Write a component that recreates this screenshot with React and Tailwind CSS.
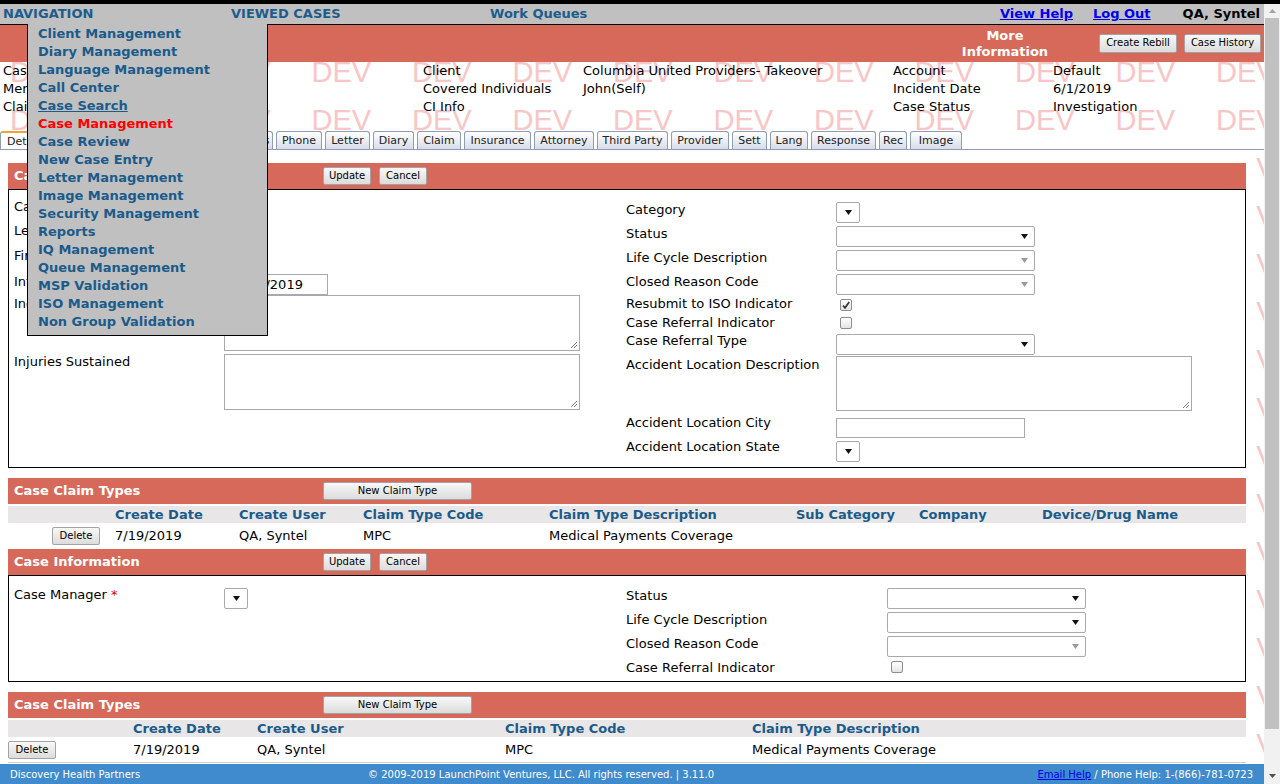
import React from "react";

const menuItems = [
  "Client Management",
  "Diary Management",
  "Language Management",
  "Call Center",
  "Case Search",
  "Case Management",
  "Case Review",
  "New Case Entry",
  "Letter Management",
  "Image Management",
  "Security Management",
  "Reports",
  "IQ Management",
  "Queue Management",
  "MSP Validation",
  "ISO Management",
  "Non Group Validation",
];

const tabs = [
  { label: "Details", w: "w-[48px]", active: true },
  { label: "Member", w: "w-[56px]" },
  { label: "Claimant", w: "w-[60px]" },
  { label: "Contacts", w: "w-[58px]" },
  { label: "Notes", w: "w-[39px]" },
  { label: "Phone", w: "w-[46px]" },
  { label: "Letter", w: "w-[45px]" },
  { label: "Diary", w: "w-[41px]" },
  { label: "Claim", w: "w-[44px]" },
  { label: "Insurance", w: "w-[67px]" },
  { label: "Attorney", w: "w-[60px]" },
  { label: "Third Party", w: "w-[71px]" },
  { label: "Provider", w: "w-[58px]" },
  { label: "Sett", w: "w-[35px]" },
  { label: "Lang", w: "w-[38px]" },
  { label: "Response", w: "w-[65px]" },
  { label: "Rec", w: "w-[28px]" },
  { label: "Image", w: "w-[52px]" },
];

const infoRows = [
  ["Case Number", "", "Client", "Columbia United Providers- Takeover", "Account", "Default"],
  ["Member", "", "Covered Individuals", "John(Self)", "Incident Date", "6/1/2019"],
  ["Claimant", "", "CI Info", "", "Case Status", "Investigation"],
];

const wmRows = Array.from({ length: 16 });
const wmCols = Array.from({ length: 13 });

function Btn({ children, className }) {
  return (
    <div className={"h-[18px] border border-[#a3a3a3] rounded-[2px] bg-linear-to-b from-[#f8f8f8] to-[#dcdcdc] text-[10px] text-black flex items-center justify-center leading-none " + className}>
      {children}
    </div>
  );
}

function Arrow({ disabled }) {
  return (
    <svg width="7" height="5" viewBox="0 0 7 5">
      <path d="M0 0H7L3.5 5Z" fill={disabled ? "#9a9a9a" : "#111"} />
    </svg>
  );
}

function Select({ className, disabled, small }) {
  return (
    <div className={"h-[21px] border border-[#a9a9a9] rounded-[2px] bg-white flex items-center " + (small ? "justify-center " : "justify-end pr-[6px] ") + className}>
      <Arrow disabled={disabled} />
    </div>
  );
}

function Check({ checked }) {
  return (
    <div className="w-[12px] h-[12px] border border-[#8e8e8e] rounded-[2px] bg-linear-to-b from-white to-[#e4e4e4] flex items-center justify-center">
      {checked && (
        <svg width="10" height="10" viewBox="0 0 10 10">
          <path d="M2 5.5L4 7.8L8.2 2" stroke="#333" strokeWidth="1.7" fill="none" />
        </svg>
      )}
    </div>
  );
}

function TextArea({ className }) {
  return (
    <div className={"relative border border-[#a9a9a9] bg-white " + className}>
      <svg width="9" height="9" viewBox="0 0 9 9" className="absolute right-[1px] bottom-[1px]">
        <path d="M8 2L2 8M8 5L5 8" stroke="#7a7a7a" strokeWidth="1" />
      </svg>
    </div>
  );
}

function SectionHeader({ title, children }) {
  return (
    <div className="h-[26px] bg-[#d7695a] flex items-center">
      <div className="w-[315px] pl-[6px] font-bold text-white">{title}</div>
      <div className="flex gap-[8px]">{children}</div>
    </div>
  );
}

function Row({ label, labelCls = "", h, children, col = "w-[210px]" }) {
  return (
    <div className={"flex " + h}>
      <div className={"leading-[14px] " + col + " " + labelCls}>{label}</div>
      <div>{children}</div>
    </div>
  );
}

export default function App() {
  return (
    <div className="w-[1280px] h-[784px] overflow-hidden bg-white text-black text-[13px] font-['DejaVu_Sans',sans-serif]">
      <div className="h-[4px] bg-black" />
      <div className="flex h-[780px]">
        <div className="relative w-[1264px] flex flex-col overflow-hidden">
          {/* DEV watermark */}
          <div className="absolute inset-0 pt-[54px] font-['Liberation_Sans',sans-serif] text-[29px] leading-[29px] text-[#f8c6c6] pointer-events-none">
            {wmRows.map((_, r) => (
              <div key={r} className="h-[48px] flex pl-[10px]">
                {wmCols.map((_, c) => (
                  <span key={c} className="w-[100.5px] shrink-0">DEV</span>
                ))}
              </div>
            ))}
          </div>

          {/* top nav */}
          <div className="relative h-[20px] bg-[#c0c0c0] flex items-center font-bold leading-[20px]">
            <div className="w-[231px] pl-[3px] text-[#1b5d8d]">NAVIGATION</div>
            <div className="w-[259px] text-[#1b5d8d]">VIEWED CASES</div>
            <div className="flex-1 text-[#1b5d8d]">Work Queues</div>
            <div className="text-[#0000ee] underline">View Help</div>
            <div className="ml-[20px] text-[#0000ee] underline">Log Out</div>
            <div className="ml-[32px] pr-[4px]">QA, Syntel</div>
          </div>

          {/* red title bar */}
          <div className="relative h-[38px] border-t border-black bg-[#d7695a] flex items-center justify-end pr-[3px]">
            <div className="w-[130px] text-center text-white font-bold leading-[16px]">
              More
              <br />
              Information
            </div>
            <div className="ml-[29px] flex gap-[7px] mb-[1px]">
              <Btn className="w-[78px] h-[19px]">Create Rebill</Btn>
              <Btn className="w-[77px] h-[19px]">Case History</Btn>
            </div>
          </div>

          {/* case info summary */}
          <div className="relative h-[66px] leading-[18px]">
            {infoRows.map((row, i) => (
              <div key={i} className="grid grid-cols-[160px_260px_160px_310px_160px_1fr] pl-[3px]">
                {row.map((cell, j) => (
                  <div key={j} className="whitespace-nowrap">{cell}</div>
                ))}
              </div>
            ))}
          </div>

          {/* tabs */}
          <div className="relative h-[22px] border-b border-[#8e9db2] flex items-end gap-[3px]">
            {tabs.map((t) => (
              <div
                key={t.label}
                className={
                  "h-[18px] text-[11px] leading-[17px] border border-b-0 rounded-t-[3px] text-[#222] whitespace-nowrap overflow-hidden " +
                  t.w +
                  (t.active
                    ? " bg-white border-[#8e9db2] border-t-2 border-t-[#eda43a] pl-[6px] leading-[16px]"
                    : " text-center bg-linear-to-b from-white to-[#d8dcea] border-[#8e9db2]")
                }
              >
                {t.label}
              </div>
            ))}
          </div>

          {/* content */}
          <div className="relative flex-1 overflow-hidden flex">
            <div className="w-[1256px] bg-white pl-[8px] pr-[10px] pt-[13px]">
              <SectionHeader title="Case Details">
                <Btn className="w-[48px]">Update</Btn>
                <Btn className="w-[48px]">Cancel</Btn>
              </SectionHeader>
              <div className="border border-black bg-white flex h-[279px]">
                <div className="w-[617px] pt-[10px] flex flex-col">
                  <Row label="Case Source" h="h-[24px]" col="w-[215px] pl-[5px] leading-4" />
                  <Row label="Lead Source" h="h-[24px]" col="w-[215px] pl-[5px] leading-4" />
                  <Row label="First Notice Date" h="h-[26px]" col="w-[215px] pl-[5px] leading-4 pt-[1px]" />
                  <Row label="Intake Date" h="h-[21px]" col="w-[215px] pl-[5px] leading-4 pt-[1px]">
                    <div className="w-[104px] h-[21px] border border-[#a9a9a9] bg-white pl-[3px] leading-[19px]">07/19/2019</div>
                  </Row>
                  <Row label="Incident Description" h="h-[59px]" col="w-[215px] pl-[5px] leading-4 pt-[2px]">
                    <TextArea className="w-[356px] h-[56px]" />
                  </Row>
                  <Row label="Injuries Sustained" h="h-[56px]" col="w-[215px] pl-[5px] leading-4 pt-[1px]">
                    <TextArea className="w-[356px] h-[56px]" />
                  </Row>
                </div>
                <div className="flex-1 pt-[12px] flex flex-col">
                  <Row label="Category" h="h-[24px]" labelCls="pt-[1px]">
                    <Select small className="w-[24px]" />
                  </Row>
                  <Row label="Status" h="h-[24px]" labelCls="pt-[1px]">
                    <Select className="w-[199px]" />
                  </Row>
                  <Row label="Life Cycle Description" h="h-[24px]" labelCls="pt-[1px]">
                    <Select disabled className="w-[199px]" />
                  </Row>
                  <Row label="Closed Reason Code" h="h-[24px]" labelCls="pt-[1px]">
                    <Select disabled className="w-[199px]" />
                  </Row>
                  <Row label="Resubmit to ISO Indicator" h="h-[18px]" labelCls="-mt-[1px]">
                    <div className="pl-[4px] pt-[1px]"><Check checked /></div>
                  </Row>
                  <Row label="Case Referral Indicator" h="h-[18px]">
                    <div className="pl-[4px] pt-[1px]"><Check /></div>
                  </Row>
                  <Row label="Case Referral Type" h="h-[22px]">
                    <Select className="w-[199px]" />
                  </Row>
                  <Row label="Accident Location Description" h="h-[61px]" labelCls="pt-[2px]">
                    <TextArea className="w-[356px] h-[55px]" />
                  </Row>
                  <Row label="Accident Location City" h="h-[23px]" labelCls="-mt-[1px]">
                    <div className="mt-[1px] w-[189px] h-[20px] border border-[#a9a9a9] bg-white" />
                  </Row>
                  <Row label="Accident Location State" h="h-[22px]">
                    <Select small className="w-[24px] mt-[1px]" />
                  </Row>
                </div>
              </div>

              {/* claim types 1 */}
              <div className="mt-[10px]">
                <SectionHeader title="Case Claim Types">
                  <Btn className="w-[149px]">New Claim Type</Btn>
                </SectionHeader>
                <div className="mt-[2px] h-[17px] bg-[#e8e6e6] grid grid-cols-[107px_124px_124px_186px_247px_123px_123px_1fr] font-bold text-[#1a5b8b] leading-[17px]">
                  <div />
                  <div>Create Date</div>
                  <div>Create User</div>
                  <div>Claim Type Code</div>
                  <div>Claim Type Description</div>
                  <div>Sub Category</div>
                  <div>Company</div>
                  <div>Device/Drug Name</div>
                </div>
                <div className="h-[25px] bg-white grid grid-cols-[107px_124px_124px_186px_247px_123px_123px_1fr] items-center">
                  <div className="pl-[44px]"><Btn className="w-[48px]">Delete</Btn></div>
                  <div>7/19/2019</div>
                  <div>QA, Syntel</div>
                  <div>MPC</div>
                  <div>Medical Payments Coverage</div>
                  <div />
                  <div />
                  <div />
                </div>
              </div>

              {/* case information */}
              <div className="mt-[1px]">
                <SectionHeader title="Case Information">
                  <Btn className="w-[48px]">Update</Btn>
                  <Btn className="w-[48px]">Cancel</Btn>
                </SectionHeader>
                <div className="border border-black bg-white flex h-[107px]">
                  <div className="w-[617px] pt-[12px]">
                    <Row label={<>Case Manager <span className="text-[#e00000]">*</span></>} h="h-[24px]" col="w-[215px] pl-[5px] leading-4">
                      <Select small className="w-[24px]" />
                    </Row>
                  </div>
                  <div className="flex-1 pt-[12px] flex flex-col">
                    <Row label="Status" h="h-[24px]" col="w-[261px]" labelCls="pt-[1px]">
                      <Select className="w-[199px]" />
                    </Row>
                    <Row label="Life Cycle Description" h="h-[24px]" col="w-[261px]" labelCls="pt-[1px]">
                      <Select className="w-[199px]" />
                    </Row>
                    <Row label="Closed Reason Code" h="h-[24px]" col="w-[261px]" labelCls="pt-[1px]">
                      <Select disabled className="w-[199px]" />
                    </Row>
                    <Row label="Case Referral Indicator" h="h-[18px]" col="w-[261px]" labelCls="pt-[1px]">
                      <div className="pl-[4px] pt-[1px]"><Check /></div>
                    </Row>
                  </div>
                </div>
              </div>

              {/* claim types 2 */}
              <div className="mt-[10px]">
                <SectionHeader title="Case Claim Types">
                  <Btn className="w-[149px]">New Claim Type</Btn>
                </SectionHeader>
                <div className="mt-[2px] h-[17px] bg-[#e8e6e6] grid grid-cols-[125px_124px_248px_247px_1fr] font-bold text-[#1a5b8b] leading-[17px]">
                  <div />
                  <div>Create Date</div>
                  <div>Create User</div>
                  <div>Claim Type Code</div>
                  <div>Claim Type Description</div>
                </div>
                <div className="h-[26px] bg-white border-b border-[#cfcfcf] grid grid-cols-[125px_124px_248px_247px_1fr] items-center">
                  <div><Btn className="w-[48px]">Delete</Btn></div>
                  <div>7/19/2019</div>
                  <div>QA, Syntel</div>
                  <div>MPC</div>
                  <div>Medical Payments Coverage</div>
                </div>
              </div>
            </div>
          </div>

          {/* footer */}
          <div className="relative h-[20px] bg-[#3f8bcd] text-white text-[10px] flex items-center whitespace-nowrap">
            <div className="w-[368px] pl-[10px]">Discovery Health Partners</div>
            <div>© 2009-2019 LaunchPoint Ventures, LLC. All rights reserved. | 3.11.0</div>
            <div className="flex-1 text-right pr-[11px]">
              <span className="text-[#0000ee] underline">Email Help</span> / Phone Help: 1-(866)-781-0723
            </div>
          </div>

          {/* navigation dropdown */}
          <div className="absolute left-[27px] top-[20px] z-30 w-[241px] h-[312px] bg-[#c0c0c0] border border-t-0 border-black pl-[10px] pt-[1px] font-bold leading-[18px] text-[#1a5b8b]">
            {menuItems.map((m) => (
              <div
                key={m}
                className={
                  m === "Case Management"
                    ? "text-[#ff0000]"
                    : m === "Case Search"
                    ? "underline"
                    : ""
                }
              >
                {m}
              </div>
            ))}
          </div>
        </div>

        {/* scrollbar */}
        <div className="w-[16px] bg-[#f1f1f1] flex flex-col items-center">
          <div className="h-[14px] flex items-center justify-center">
            <svg width="7" height="4" viewBox="0 0 7 4"><path d="M0 4H7L3.5 0Z" fill="#a3a3a3" /></svg>
          </div>
          <div className="w-[14px] h-[711px] bg-[#c1c1c1]" />
          <div className="flex-1" />
          <div className="h-[16px] flex items-center justify-center">
            <svg width="7" height="4" viewBox="0 0 7 4"><path d="M0 0H7L3.5 4Z" fill="#505050" /></svg>
          </div>
        </div>
      </div>
    </div>
  );
}
